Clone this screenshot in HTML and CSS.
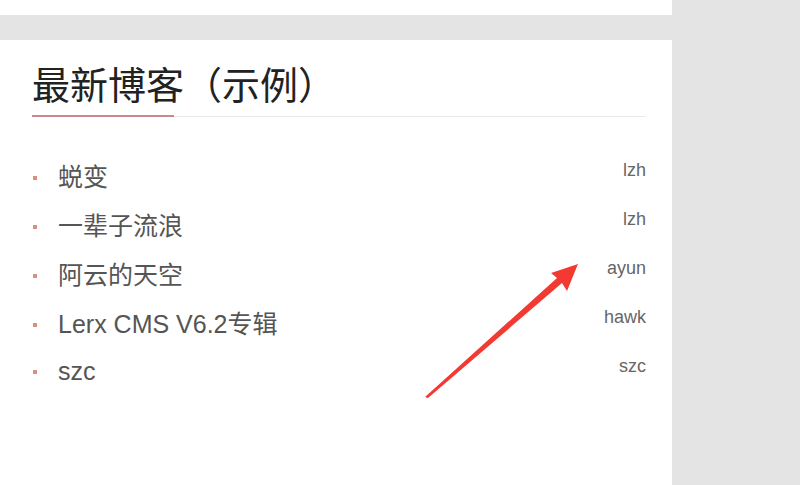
FILE: index.html
```html
<!DOCTYPE html>
<html lang="zh-CN">
<head>
  <meta charset="UTF-8">
  <meta name="viewport" content="width=device-width, initial-scale=1.0">
  <title>最新博客</title>
  <link rel="stylesheet" href="styles.css">
</head>
<body>

  <div class="page">
    <div class="main">
      <!-- 上一个模块的底部 -->
      <div class="prev-card"></div>

      <!-- 最新博客 -->
      <div class="card">
        <h2 class="card-title"><span>最新博客（示例）</span></h2>
        <ul class="blog-list">
          <li><a href="#">蜕变</a><span class="author">lzh</span></li>
          <li><a href="#">一辈子流浪</a><span class="author">lzh</span></li>
          <li><a href="#">阿云的天空</a><span class="author">ayun</span></li>
          <li><a href="#">Lerx CMS V6.2专辑</a><span class="author">hawk</span></li>
          <li><a href="#">szc</a><span class="author">szc</span></li>
        </ul>

        <!-- 标注箭头 -->
        <svg class="arrow" width="180" height="150" viewBox="410 250 180 150">
          <polygon points="425,397 428,398 562,283 567,291 578,264 551,273 557,278" fill="#f23a33"/>
        </svg>
      </div>
    </div>
    <div class="side"></div>
  </div>

</body>
</html>
```

FILE: styles.css
```css
body {
  margin: 0;
  padding: 0;
  background-color: #e4e4e4;
  font-family: "Liberation Sans", "Noto Sans CJK SC", sans-serif;
}
.page {
  display: flex;
  height: 485px;
  overflow: hidden;
}
.main {
  width: 672px;
  flex-shrink: 0;
}
.side {
  flex: 1;
}
.prev-card {
  height: 15px;
  background: #fff;
  margin-bottom: 25px;
}
.card {
  position: relative;
  background: #fff;
  padding: 21px 26px 200px 32px;
}
.card-title {
  margin: 0;
  font-size: 38px;
  font-weight: normal;
  line-height: 50px;
  color: #222;
  border-bottom: 1px solid #eaeaea;
}
.card-title span {
  display: inline-block;
}
.card-title::after {
  content: "";
  display: block;
  width: 142px;
  height: 2px;
  background: #c9898f;
  margin-top: 4px;
  margin-bottom: -1px;
}
.blog-list {
  list-style: none;
  margin: 0;
  padding: 48px 0 0 0;
}
.blog-list li {
  display: flex;
  justify-content: space-between;
  align-items: flex-start;
  height: 49px;
}
.blog-list li:last-child {
  margin-top: -2px;
}
.blog-list li a {
  position: relative;
  padding-left: 26px;
  font-size: 25px;
  line-height: 24px;
  color: #555;
  text-decoration: none;
}
.blog-list li a::before {
  content: "";
  position: absolute;
  left: 1px;
  top: 11px;
  width: 4px;
  height: 4px;
  background: #d8907c;
}
.author {
  font-size: 18px;
  line-height: 18px;
  color: #666;
  margin-top: -4px;
}
.blog-list li:last-child .author {
  margin-top: -2px;
}
.arrow {
  position: absolute;
  left: 410px;
  top: 210px;
}
```
